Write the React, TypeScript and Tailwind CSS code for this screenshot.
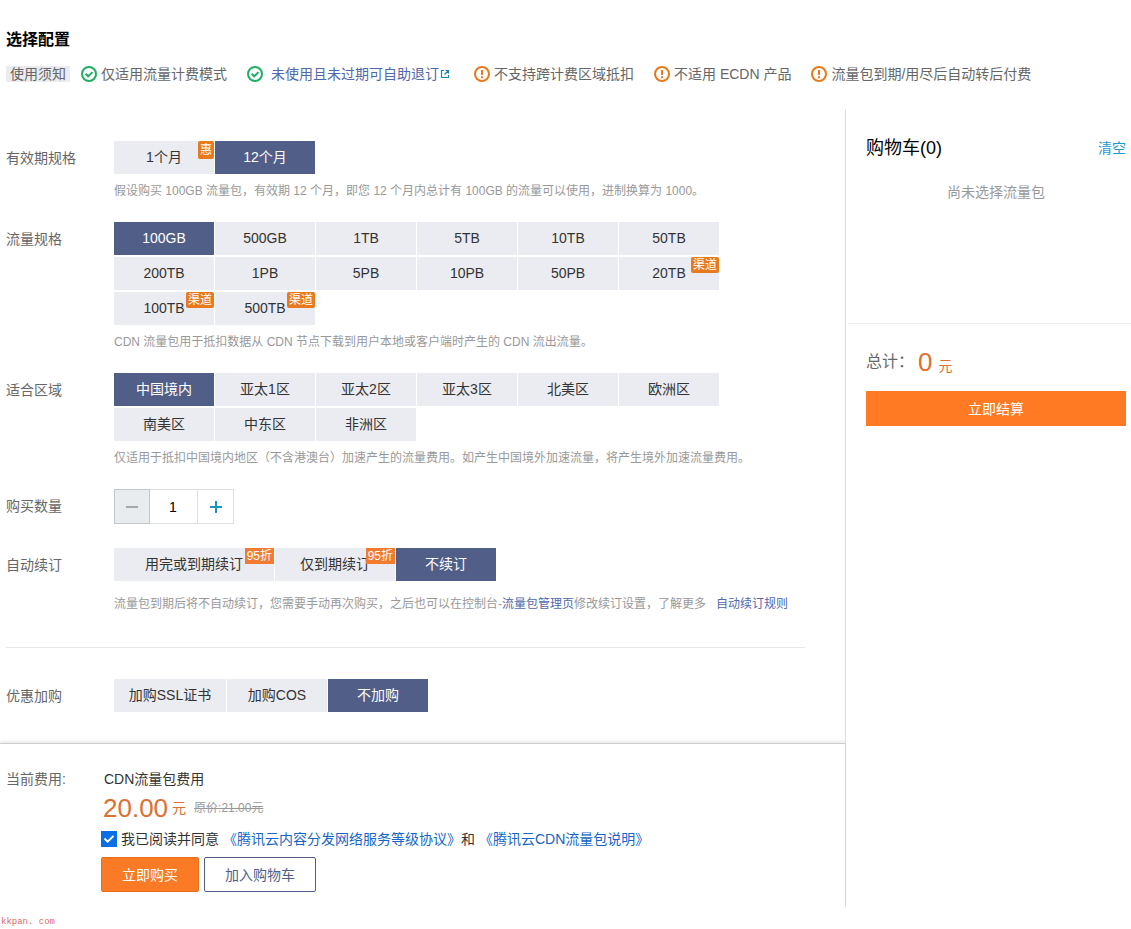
import { useState, type ReactNode } from "react";

type OptionItem = {
  label: string;
  tag?: string;
  width?: string;
};

const periods: OptionItem[] = [{ label: "1个月", tag: "惠" }, { label: "12个月" }];

const sizes: OptionItem[] = [
  { label: "100GB" },
  { label: "500GB" },
  { label: "1TB" },
  { label: "5TB" },
  { label: "10TB" },
  { label: "50TB" },
  { label: "200TB" },
  { label: "1PB" },
  { label: "5PB" },
  { label: "10PB" },
  { label: "50PB" },
  { label: "20TB", tag: "渠道" },
  { label: "100TB", tag: "渠道" },
  { label: "500TB", tag: "渠道" },
];

const regions: OptionItem[] = [
  { label: "中国境内" },
  { label: "亚太1区" },
  { label: "亚太2区" },
  { label: "亚太3区" },
  { label: "北美区" },
  { label: "欧洲区" },
  { label: "南美区" },
  { label: "中东区" },
  { label: "非洲区" },
];

const renewals: OptionItem[] = [
  { label: "用完或到期续订", tag: "95折", width: "w-40" },
  { label: "仅到期续订", tag: "95折", width: "w-30" },
  { label: "不续订" },
];

const extras: OptionItem[] = [
  { label: "加购SSL证书", width: "w-28" },
  { label: "加购COS" },
  { label: "不加购" },
];

const tagStyles: Record<string, string> = {
  惠: "rounded-xs bg-[#e8791c] leading-[18px]",
  渠道: "rounded-xs bg-[#e8791c] leading-4",
  "95折": "bg-[#f27b30] leading-4",
};

const CheckIcon = () => (
  <svg className="size-4 shrink-0" viewBox="0 0 16 16" fill="none" stroke="#1fae63" strokeWidth="2">
    <circle cx="8" cy="8" r="7" />
    <path d="M4.6 7.8l2.6 2.5 4.3-4.2" />
  </svg>
);

const WarnIcon = () => (
  <svg className="size-4 shrink-0" viewBox="0 0 16 16" fill="none" stroke="#e8791c" strokeWidth="2">
    <circle cx="8" cy="8" r="7" />
    <path d="M8 4v5M8 10.3v2" />
  </svg>
);

const ExternalIcon = () => (
  <svg className="ml-px size-2.5 shrink-0" viewBox="0 0 10 10" fill="none" stroke="#1c86a8" strokeWidth="1.2">
    <path d="M4 1.5H1.5v7h7V6M5.5 1.5h3v3M8.5 1.5l-4 4" />
  </svg>
);

const Notice = ({ icon, children }: { icon: ReactNode; children: ReactNode }) => (
  <li className="flex items-center gap-1">
    {icon}
    {children}
  </li>
);

const Row = ({ label, children }: { label: string; children: ReactNode }) => (
  <div className="flex">
    <div className="w-27 shrink-0 leading-[34px] text-[#666]">{label}</div>
    <div className="min-w-0 flex-1">{children}</div>
  </div>
);

const Hint = ({ children }: { children: ReactNode }) => (
  <p className="mt-2 text-xs leading-[18px] text-[#999]">{children}</p>
);

const Tag = ({ text }: { text: string }) => (
  <span className={`absolute top-0 right-0 px-0.5 text-xs text-white ${tagStyles[text]}`}>{text}</span>
);

type OptionGroupProps = {
  name: string;
  items: OptionItem[];
  initial: string;
};

const OptionGroup = ({ name, items, initial }: OptionGroupProps) => {
  const [value, setValue] = useState(initial);

  return (
    <div role="radiogroup" aria-label={name} className="flex max-w-[605px] flex-wrap gap-x-px gap-y-0.5">
      {items.map((item) => (
        <label
          key={item.label}
          className={`relative h-[33px] cursor-pointer text-center leading-[33px] ${item.width ?? "w-25"} ${
            value === item.label ? "bg-[#515e87] text-white" : "bg-[#ebecf1] text-[#333]"
          }`}
        >
          <input
            type="radio"
            name={name}
            className="sr-only"
            checked={value === item.label}
            onChange={() => setValue(item.label)}
          />
          {item.label}
          {item.tag && <Tag text={item.tag} />}
        </label>
      ))}
    </div>
  );
};

const Quantity = () => {
  const [count, setCount] = useState(1);

  return (
    <div className="flex h-[35px] w-30 border border-[#dcdfe3]">
      <button
        aria-label="减少"
        onClick={() => setCount(Math.max(1, count - 1))}
        className="-m-px flex w-9 items-center justify-center border border-[#c3c7cb] bg-[#e9ecef]"
      >
        <span className="h-0.5 w-3 bg-[#a5a8ab]" />
      </button>
      <input
        aria-label="购买数量"
        value={count}
        onChange={(e) => setCount(Number(e.target.value) || 1)}
        className="w-0 min-w-0 flex-1 text-center text-black outline-none"
      />
      <button
        aria-label="增加"
        onClick={() => setCount(count + 1)}
        className="flex w-9 items-center justify-center border-l border-[#dcdfe3]"
      >
        <svg className="size-3" viewBox="0 0 12 12" stroke="#1a93bd" strokeWidth="2">
          <path d="M0 6h12M6 0v12" />
        </svg>
      </button>
    </div>
  );
};

const Cart = () => (
  <aside className="w-[285px] shrink-0">
    <div className="h-[213px] pt-6 pr-[5px] pl-5">
      <div className="flex items-center justify-between">
        <h2 className="text-lg leading-7 text-black">购物车(0)</h2>
        <button className="text-[#1a9bd0]">清空</button>
      </div>
      <p className="mt-5 text-center leading-5 text-[#999]">尚未选择流量包</p>
    </div>
    <div className="ml-0.5 border-t border-[#eee] pt-[22px] pr-[5px] pl-[18px]">
      <div className="flex h-8 items-center text-base text-[#666]">
        总计：
        <p className="ml-1 flex items-baseline gap-1.5 text-[#dd6f33]">
          <span className="text-[26px] leading-8">0</span>
          <span className="text-sm leading-none">元</span>
        </p>
      </div>
      <button className="mt-[13px] h-[35px] w-full bg-[#ff7a22] text-white">立即结算</button>
    </div>
  </aside>
);

const App = () => {
  const [agreed, setAgreed] = useState(true);

  return (
    <div className="bg-white pt-7 font-['Liberation_Sans','Noto_Sans_CJK_SC',sans-serif] text-sm leading-5 text-[#333]">
      <header className="px-1.5">
        <h1 className="text-base leading-6 font-bold text-black">选择配置</h1>
        <div className="mt-3 flex items-center whitespace-nowrap text-[#666]">
          <span className="mr-[11px] bg-[#ebecef] px-1 leading-4">使用须知</span>
          <ul className="flex items-center gap-5">
            <Notice icon={<CheckIcon />}>仅适用流量计费模式</Notice>
            <Notice icon={<CheckIcon />}>
              <a href="#refund" className="mx-1 flex items-center text-[#5068ab]">
                未使用且未过期可自助退订
                <ExternalIcon />
              </a>
            </Notice>
            <Notice icon={<WarnIcon />}>不支持跨计费区域抵扣</Notice>
            <Notice icon={<WarnIcon />}>不适用 ECDN 产品</Notice>
            <Notice icon={<WarnIcon />}>流量包到期/用尽后自动转后付费</Notice>
          </ul>
        </div>
      </header>

      <div className="mt-[26px] flex">
        <main className="min-w-0 flex-1 border-r border-[#ddd]">
          {/* Package options */}
          <div className="flex flex-col gap-[22px] pt-[31px] pb-[30px] pl-1.5">
            <Row label="有效期规格">
              <OptionGroup name="有效期规格" items={periods} initial="12个月" />
              <Hint>假设购买 100GB 流量包，有效期 12 个月，即您 12 个月内总计有 100GB 的流量可以使用，进制换算为 1000。</Hint>
            </Row>
            <Row label="流量规格">
              <OptionGroup name="流量规格" items={sizes} initial="100GB" />
              <Hint>CDN 流量包用于抵扣数据从 CDN 节点下载到用户本地或客户端时产生的 CDN 流出流量。</Hint>
            </Row>
            <Row label="适合区域">
              <OptionGroup name="适合区域" items={regions} initial="中国境内" />
              <Hint>仅适用于抵扣中国境内地区（不含港澳台）加速产生的流量费用。如产生中国境外加速流量，将产生境外加速流量费用。</Hint>
            </Row>
            <Row label="购买数量">
              <Quantity />
            </Row>
            <div className="pt-0.5">
              <Row label="自动续订">
                <OptionGroup name="自动续订" items={renewals} initial="不续订" />
                <p className="mt-3.5 text-xs leading-[18px] text-[#999]">
                  流量包到期后将不自动续订，您需要手动再次购买，之后也可以在控制台-
                  <a href="#manage" className="text-[#5068ab]">流量包管理页</a>
                  修改续订设置，了解更多
                  <a href="#rules" className="ml-2.5 text-[#5068ab]">自动续订规则</a>
                </p>
              </Row>
            </div>
            <hr className="mt-3 mr-10 mb-[9px] border-[#e8e8e8]" />
            <Row label="优惠加购">
              <OptionGroup name="优惠加购" items={extras} initial="不加购" />
            </Row>
          </div>

          {/* Price and checkout */}
          <div className="flex border-t border-[#ccc] pt-[25px] pb-[15px] pl-1.5 shadow-[0_-2px_3px_rgba(0,0,0,0.08)]">
            <div className="w-[95px] shrink-0 text-[#666]">当前费用:</div>
            <div>
              <p className="pl-[3px]">CDN流量包费用</p>
              <p className="mt-[3px] flex h-8 items-center pl-0.5 text-[#dd6f33]">
                <span className="text-[26px]">20.00</span>
                <span className="ml-1">元</span>
                <del className="ml-2 text-xs leading-5 text-[#999]">原价:21.00元</del>
              </p>
              <div className="mt-[5px] flex items-center">
                <label className="flex items-center gap-1">
                  <span className="relative flex size-4">
                    <input
                      type="checkbox"
                      checked={agreed}
                      onChange={(e) => setAgreed(e.target.checked)}
                      className="size-4 appearance-none border border-[#0a6de4] checked:bg-[#0a6de4]"
                    />
                    {agreed && (
                      <svg className="pointer-events-none absolute inset-0" viewBox="0 0 16 16" fill="none" stroke="#fff" strokeWidth="2">
                        <path d="M3.5 7.5l3.2 3.2 5.8-5.8" />
                      </svg>
                    )}
                  </span>
                  我已阅读并同意
                </label>
                <a href="#sla" className="ml-1 text-[#1466c8]">《腾讯云内容分发网络服务等级协议》</a>
                和
                <a href="#terms" className="ml-1 text-[#1466c8]">《腾讯云CDN流量包说明》</a>
              </div>
              <div className="mt-2 flex gap-[5px]">
                <button className="h-[35px] w-[98px] rounded-xs border border-[#e8701c] bg-[#fb7a25] text-white">
                  立即购买
                </button>
                <button className="h-[35px] w-28 rounded-xs border border-[#515e87] text-[#515e87]">加入购物车</button>
              </div>
            </div>
          </div>
        </main>

        <Cart />
      </div>

      <footer className="pt-2 pl-px font-['Liberation_Mono',monospace] text-[9px] leading-[14px] text-[#e06a66]">
        kkpan. com
      </footer>
    </div>
  );
};

export default App;
